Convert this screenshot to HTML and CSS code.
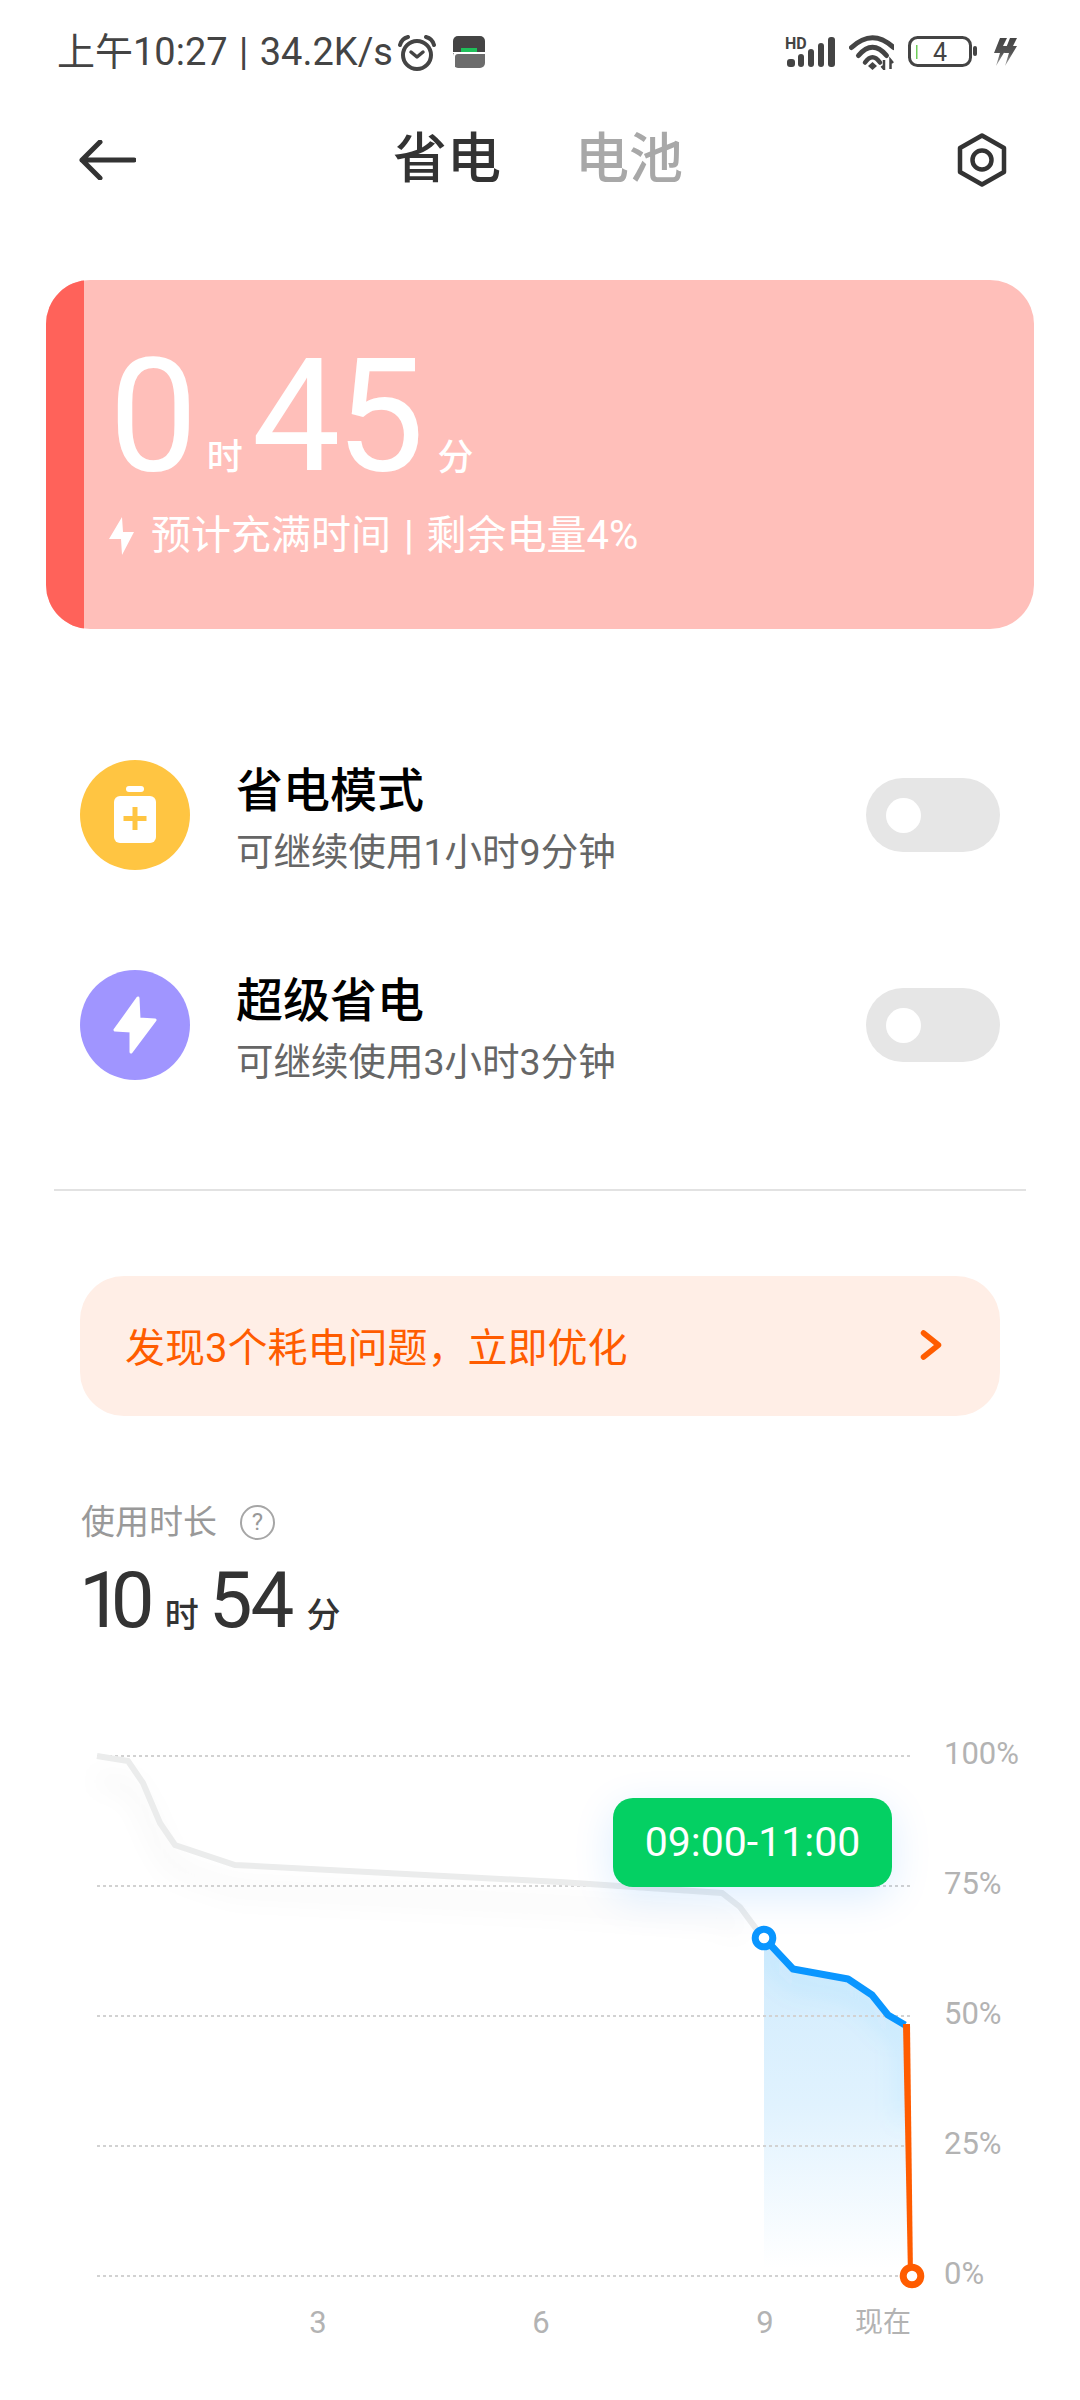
FILE: index.html
```html
<!DOCTYPE html>
<html lang="zh-CN">
<head>
    <meta charset="UTF-8">
    <title>省电与电池</title>
    <link rel="stylesheet" href="styles.css">
</head>

<body>
<!--状态栏-->
<div class="status-bar">
    <span class="status-time">上午10:27 | 34.2K/s</span>
    <svg class="ic-alarm" width="40" height="38" viewBox="0 0 40 38">
        <circle cx="20" cy="20" r="14" fill="none" stroke="#444" stroke-width="4"/>
        <path d="M14 17l6 5 6-5" fill="none" stroke="#444" stroke-width="3.5" stroke-linecap="round" stroke-linejoin="round"/>
        <path d="M3 10C4 6 7 3 11 2M37 10C36 6 33 3 29 2" fill="none" stroke="#444" stroke-width="4" stroke-linecap="round"/>
    </svg>
    <svg class="ic-app" width="32" height="32" viewBox="0 0 32 32">
        <path d="M5 0h22a5 5 0 0 1 5 5v11H0V5a5 5 0 0 1 5-5z" fill="#444"/>
        <rect x="8" y="12" width="16" height="5" fill="#1fc05a"/>
        <path d="M0 17h32v10a5 5 0 0 1-5 5H5a5 5 0 0 1-5-5z" fill="#6c6c6c"/>
        <path d="M0 32V20a4 4 0 0 1 4-4h28v2H5a3 3 0 0 0-3 3v11z" fill="#fff"/>
    </svg>
    <div class="status-right">
        <svg width="50" height="38" viewBox="0 -3 50 38">
            <text class="hd-text" x="0" y="13">HD</text>
            <rect x="2" y="23" width="8" height="8" rx="3" fill="#444"/>
            <rect x="13" y="18" width="6" height="13" rx="3" fill="#444"/>
            <rect x="23" y="13" width="6" height="18" rx="3" fill="#444"/>
            <rect x="33" y="7" width="6" height="24" rx="3" fill="#444"/>
            <rect x="43" y="1" width="7" height="30" rx="3" fill="#444"/>
        </svg>
        <svg width="45" height="36" viewBox="0 0 45 36">
            <path d="M2.500 13.500Q23.500-6 44.500 13.500" fill="none" stroke="#444" stroke-width="5" stroke-linecap="round"/>
            <path d="M9.500 21.500Q23.500 5 37.500 21.500" fill="none" stroke="#444" stroke-width="5" stroke-linecap="round"/>
            <path d="M16 28.500Q23.500 18 31 28.500" fill="none" stroke="#444" stroke-width="4.500" stroke-linecap="round"/>
            <path d="M23.500 28l4.500 4-4.500 4-4.500-4z" fill="#444"/>
            <path d="M35 26v9l-2.500-3M41.500 35v-9l2.500 3" fill="none" stroke="#444" stroke-width="2.500"/>
        </svg>
        <svg width="70" height="32" viewBox="0 0 70 32">
            <rect x="1.5" y="1.5" width="61" height="28" rx="8" fill="none" stroke="#444" stroke-width="3"/>
            <rect x="8" y="9" width="1.5" height="14" fill="#6fce5a"/>
            <text class="bat-text" x="32" y="25" text-anchor="middle">4</text>
            <rect x="65" y="10" width="4" height="10" rx="2" fill="#444"/>
        </svg>
        <svg width="26" height="30" viewBox="0 0 26 30">
            <defs>
                <linearGradient id="boltFade" x1="0" y1="0" x2="0" y2="1">
                    <stop offset="0" stop-color="#444"/>
                    <stop offset="0.55" stop-color="#555"/>
                    <stop offset="1" stop-color="#aaa"/>
                </linearGradient>
            </defs>
            <path d="M8 1h7l-4 8h5L4 29l4-13H2zM18 1h7l-4 8h4L13 29l4-13h-5z" fill="url(#boltFade)"/>
        </svg>
    </div>
</div>

<!--标题栏-->
<div class="nav">
    <svg width="57" height="40" viewBox="0 0 57 40">
        <path d="M21 2L3 20l18 18M3 20h52" fill="none" stroke="#333" stroke-width="5" stroke-linecap="round" stroke-linejoin="round"/>
    </svg>
    <div class="tabs">
        <span class="tab active">省电</span>
        <span class="tab">电池</span>
    </div>
    <svg class="nav-gear" width="50" height="54" viewBox="0 0 50 54">
        <path d="M25 2.500l22 12.500v24L25 51.500 3 39V15z" fill="none" stroke="#333" stroke-width="4.500" stroke-linejoin="round"/>
        <circle cx="25" cy="27" r="9.500" fill="none" stroke="#333" stroke-width="4.500"/>
    </svg>
</div>

<!--充电卡片-->
<div class="charge-card">
    <div class="charge-strip"></div>
    <div class="charge-body">
        <div class="big-time">
            <span class="big-num">0</span>
            <span class="big-unit">时</span>
            <span class="big-num num-gap">45</span>
            <span class="big-unit unit-tight">分</span>
        </div>
        <div class="charge-info">
            <svg class="charge-bolt" width="26" height="38" viewBox="0 0 26 38">
                <path d="M13 0L0 22h12l1 16 12-23H14z" fill="#fff"/>
            </svg>
            <span>预计充满时间 | 剩余电量4%</span>
        </div>
    </div>
</div>

<!--省电开关-->
<div class="modes">
    <div class="mode-row">
        <div class="mode-icon icon-yellow">
            <svg width="110" height="110" viewBox="0 0 110 110">
                <rect x="46" y="26" width="18" height="6" rx="3" fill="#fff"/>
                <rect x="34" y="36" width="42" height="47" rx="6" fill="#fff"/>
                <path d="M55 47v23M43.500 58.500h23" stroke="#ffc542" stroke-width="5"/>
            </svg>
        </div>
        <div class="mode-text">
            <div class="mode-title">省电模式</div>
            <div class="mode-sub">可继续使用1小时9分钟</div>
        </div>
        <div class="toggle"><span class="knob"></span></div>
    </div>
    <div class="mode-row">
        <div class="mode-icon icon-purple">
            <svg width="110" height="110" viewBox="0 0 110 110">
                <path d="M58 28L35 60l16 1v21l24-32-16-1z" fill="#fff" stroke="#fff" stroke-width="3" stroke-linejoin="round"/>
            </svg>
        </div>
        <div class="mode-text">
            <div class="mode-title">超级省电</div>
            <div class="mode-sub">可继续使用3小时3分钟</div>
        </div>
        <div class="toggle"><span class="knob"></span></div>
    </div>
</div>

<div class="divider"></div>

<div class="banner">
    <span>发现3个耗电问题，立即优化</span>
    <svg width="22" height="30" viewBox="0 0 22 30">
        <path d="M3.500 3L18.500 15 3.500 27" fill="none" stroke="#ff5c00" stroke-width="5.500" stroke-linecap="round" stroke-linejoin="round"/>
    </svg>
</div>

<!--使用时长-->
<div class="usage">
    <div class="usage-label">
        <span>使用时长</span>
        <span class="help">?</span>
    </div>
    <div class="usage-time">
        <span class="usage-num num-ten">10</span>
        <span class="usage-unit unit-hour">时</span>
        <span class="usage-num">54</span>
        <span class="usage-unit unit-min">分</span>
    </div>
</div>

<!--电量曲线-->
<div class="chart">
    <svg width="1080" height="680" viewBox="0 1720 1080 680">
        <defs>
            <linearGradient id="areaFill" gradientUnits="userSpaceOnUse" x1="0" y1="1940" x2="0" y2="2268">
                <stop offset="0" stop-color="#d0ebfd"/>
                <stop offset="0.5" stop-color="#e0f2fe"/>
                <stop offset="1" stop-color="#ffffff"/>
            </linearGradient>
            <filter id="soft" x="-10%" y="-50%" width="120%" height="200%">
                <feGaussianBlur stdDeviation="12"/>
            </filter>
            <clipPath id="areaClip">
                <path d="M764 1938L793 1969 848 1979 872 1995 888 2015 905 2025 912 2276H764z"/>
            </clipPath>
        </defs>

        <path d="M97 1780L128 1785 143 1807 160 1847 175 1869 235 1889 560 1905 722 1917 740 1931" fill="none" stroke="#000" stroke-opacity="0.035" stroke-width="12" filter="url(#soft)"/>
        <path d="M764 1938L793 1969 848 1979 872 1995 888 2015 905 2025 912 2276H764z" fill="url(#areaFill)"/>
        <g clip-path="url(#areaClip)">
            <path d="M764 1950L793 1981 848 1991 872 2007 888 2027 905 2037V2120" fill="none" stroke="#36b0f5" stroke-opacity="0.1" stroke-width="14" filter="url(#soft)"/>
        </g>

        <g class="grid-lines">
            <path d="M97 1756H913"/>
            <path d="M97 1886H913"/>
            <path d="M97 2016H913"/>
            <path d="M97 2146H913"/>
            <path d="M97 2276H913"/>
        </g>

        <path d="M97 1756L128 1761 143 1783 160 1823 175 1845 235 1865 560 1882 722 1893 740 1907 763 1938" fill="none" stroke="#ebecec" stroke-width="6"/>
        <path d="M764 1938L793 1969 848 1979 872 1995 888 2015 905 2025" fill="none" stroke="#0a96ff" stroke-width="7" stroke-linejoin="round"/>
        <path d="M903 2024h7l3 252h-5z" fill="#ff5c00"/>
        <circle cx="764" cy="1938" r="8.800" fill="#fff" stroke="#0a96ff" stroke-width="7"/>
        <circle cx="912" cy="2276" r="8.800" fill="#fff" stroke="#ff5c00" stroke-width="7"/>

        <g class="axis-text">
            <text x="944" y="1764">100%</text>
            <text x="944" y="1894">75%</text>
            <text x="944" y="2024">50%</text>
            <text x="944" y="2154">25%</text>
            <text x="944" y="2284">0%</text>
            <text x="318" y="2333" text-anchor="middle">3</text>
            <text x="541" y="2333" text-anchor="middle">6</text>
            <text x="765" y="2333" text-anchor="middle">9</text>
            <text class="axis-cjk" x="855" y="2332">现在</text>
        </g>
    </svg>
    <div class="chart-tip">09:00-11:00</div>
</div>
</body>
</html>
```

FILE: styles.css
```css
body,
div,
span {
    margin: 0;
    padding: 0;
}
body {
    width: 1080px;
    height: 2400px;
    overflow: hidden;
    background: #fff;
    font-family: Roboto, "Noto Sans CJK SC", sans-serif;
}
svg {
    display: block;
    flex: none;
}

/* 状态栏 */
.status-bar {
    height: 104px;
    padding: 0 62px 0 57px;
    display: flex;
    align-items: center;
    color: #444;
}
.status-time {
    font-size: 38px;
    word-spacing: 2px;
    line-height: 104px;
    white-space: nowrap;
}
.ic-alarm {
    margin-left: 4px;
    margin-top: 4px;
}
.ic-app {
    margin-left: 16px;
}
.status-right {
    margin-left: auto;
    display: flex;
    align-items: center;
    gap: 14px;
}
.hd-text {
    font-size: 16px;
    font-weight: 700;
    fill: #444;
}
.bat-text {
    font-size: 25px;
    fill: #444;
}

/* 标题栏 */
.nav {
    height: 112px;
    padding: 0 73px 0 79px;
    display: flex;
    align-items: center;
}
.tabs {
    margin-left: 257px;
    display: flex;
    gap: 74px;
}
.tab {
    font-size: 54px;
    line-height: 60px;
    font-weight: 500;
    color: #a8a8a8;
}
.tab.active {
    color: #333;
}
.nav-gear {
    margin-left: auto;
}

/* 充电卡片 */
.charge-card {
    margin: 64px 46px 0 46px;
    height: 349px;
    border-radius: 44px;
    overflow: hidden;
    background: #ffbfba;
    display: flex;
}
.charge-strip {
    width: 38px;
    background: #ff625a;
}
.charge-body {
    padding: 57px 0 0 25px;
    color: #fff;
}
.big-time {
    display: flex;
    align-items: baseline;
}
.big-num {
    font-size: 158px;
    line-height: 158px;
    letter-spacing: -2px;
}
.big-unit {
    font-size: 36px;
    line-height: 36px;
    font-weight: 500;
    margin-left: 11px;
}
.num-gap {
    margin-left: 9px;
    letter-spacing: -5px;
}
.unit-tight {
    margin-left: 18px;
}
.charge-info {
    margin-top: 21px;
    display: flex;
    align-items: center;
    font-size: 40px;
    word-spacing: 3px;
    line-height: 39px;
    white-space: nowrap;
}
.charge-bolt {
    margin-right: 16px;
}

/* 省电开关 */
.modes {
    margin-top: 131px;
    padding: 0 80px;
    display: flex;
    flex-direction: column;
    gap: 100px;
}
.mode-row {
    height: 110px;
    display: flex;
    align-items: flex-start;
}
.mode-icon {
    width: 110px;
    height: 110px;
    border-radius: 50%;
}
.icon-yellow {
    background: #ffc542;
}
.icon-purple {
    background: #a095ff;
}
.mode-text {
    margin-left: 46px;
    padding-top: 7px;
}
.mode-title {
    font-size: 47px;
    line-height: 47px;
    font-weight: 500;
    color: #000;
}
.mode-sub {
    margin-top: 20px;
    font-size: 37.500px;
    line-height: 37px;
    color: #666;
}
.toggle {
    margin: 18px 0 0 auto;
    width: 134px;
    height: 74px;
    padding-left: 20px;
    box-sizing: border-box;
    border-radius: 37px;
    background: #e6e6e6;
    display: flex;
    align-items: center;
}
.knob {
    width: 35px;
    height: 35px;
    border-radius: 50%;
    background: #fff;
}

.divider {
    margin: 109px 54px 0;
    height: 2px;
    background: #e2e2e2;
}

.banner {
    margin: 85px 80px 0;
    height: 140px;
    box-sizing: border-box;
    padding: 0 58px 3px 45px;
    border-radius: 44px;
    background: #ffeee6;
    color: #ff5c00;
    font-size: 40px;
    display: flex;
    align-items: center;
    justify-content: space-between;
}

/* 使用时长 */
.usage {
    margin-top: 89px;
    padding-left: 81px;
}
.usage-label {
    height: 34px;
    display: flex;
    align-items: center;
    gap: 23px;
    font-size: 34px;
    line-height: 34px;
    color: #999;
}
.help {
    width: 35px;
    height: 35px;
    box-sizing: border-box;
    border: 2px solid #a6a6a6;
    border-radius: 50%;
    font-size: 24px;
    line-height: 31px;
    text-align: center;
}
.usage-time {
    margin: 23px 0 0 -2px;
    display: flex;
    align-items: baseline;
    color: #333;
}
.usage-num {
    font-size: 78px;
    line-height: 78px;
    letter-spacing: -2px;
}
.num-ten {
    letter-spacing: -12px;
}
.usage-unit {
    font-size: 34px;
    line-height: 34px;
    font-weight: 500;
}
.unit-hour {
    margin: 0 10px 0 22px;
}
.unit-min {
    margin-left: 14px;
}

/* 电量曲线 */
.chart {
    position: relative;
    margin-top: 80px;
    height: 680px;
}
.grid-lines path {
    fill: none;
    stroke: #d2d2d2;
    stroke-width: 2;
    stroke-dasharray: 3 3;
}
.axis-text text {
    font-size: 31px;
    fill: #b3b3b3;
}
.axis-text .axis-cjk {
    font-size: 28px;
}
.chart-tip {
    position: absolute;
    left: 613px;
    top: 78px;
    width: 279px;
    height: 89px;
    border-radius: 20px;
    background: #04d063;
    box-shadow: 0 10px 40px rgba(0, 130, 255, 0.14);
    color: #fff;
    font-size: 41px;
    line-height: 89px;
    text-align: center;
}
```
